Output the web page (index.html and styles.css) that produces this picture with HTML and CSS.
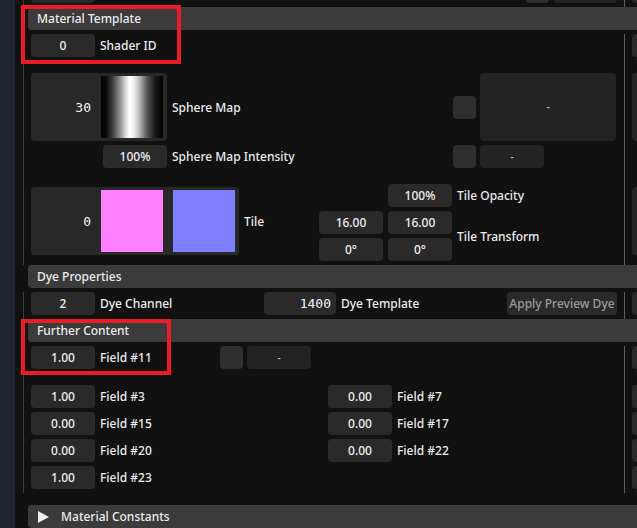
FILE: index.html
```html
<!DOCTYPE html>
<html lang="en">
<head>
<meta charset="utf-8">
<title>Material Template</title>
<link rel="stylesheet" href="styles.css">
</head>
<body>
<div class="app">
  <aside class="sidebar"></aside>
  <main class="main">
    <div class="tbl tbl-top">
      <div class="col-l">
        <div class="row">
          <span class="inp"></span>
          <span class="grp-r"><span class="sq"></span><span class="inp dk"></span></span>
        </div>
      </div>
      <div class="col-r"><span class="inp"></span></div>
    </div>

    <div class="hdr">Material Template</div>
    <div class="tbl">
      <div class="col-l">
        <div class="row"><span class="inp">0</span><span class="lbl">Shader ID</span></div>
        <div class="sphere">
          <div class="cell">
            <div class="bigbox sphere-box"><span class="num">30</span><span class="img grad"></span></div>
            <span class="lbl">Sphere Map</span>
          </div>
          <div class="cell">
            <span class="sq"></span><span class="bigbox dk dash-box"><span class="dash">-</span></span>
          </div>
          <div class="cell cell-intensity">
            <span class="inp">100%</span><span class="lbl">Sphere Map Intensity</span>
          </div>
          <div class="cell">
            <span class="sq"></span><span class="inp dk"><span class="dash">-</span></span>
          </div>
        </div>
        <div class="tile">
          <div class="cell tile-left">
            <div class="bigbox tile-box"><span class="num">0</span><span class="img pink"></span><span class="img blue"></span></div>
            <span class="lbl">Tile</span>
          </div>
          <div class="tile-grid">
            <span class="inp c2">100%</span><span class="lbl c3">Tile Opacity</span>
            <span class="inp">16.00</span><span class="inp">16.00</span><span class="lbl span2">Tile Transform</span>
            <span class="inp">0°</span><span class="inp">0°</span>
          </div>
        </div>
      </div>
      <div class="col-r">
        <span class="inp"></span>
        <span class="rbox r-sphere"></span>
        <span class="rbox r-tile"></span>
      </div>
    </div>

    <div class="hdr">Dye Properties</div>
    <div class="tbl">
      <div class="col-l">
        <div class="row">
          <span class="grp grp-dye"><span class="inp">2</span><span class="lbl">Dye Channel</span></span>
          <span class="grp"><span class="inp wide mono">1400</span><span class="lbl">Dye Template</span></span>
          <span class="btn">Apply Preview Dye</span>
        </div>
      </div>
      <div class="col-r"><span class="inp"></span></div>
    </div>

    <div class="hdr">Further Content</div>
    <div class="tbl tbl-last">
      <div class="col-l">
        <div class="row">
          <span class="grp grp-f11"><span class="inp">1.00</span><span class="lbl">Field #11</span></span>
          <span class="grp grp-sq"><span class="sq"></span><span class="inp dk"><span class="dash">-</span></span></span>
        </div>
        <div class="fields">
          <div class="row"><span class="inp">1.00</span><span class="lbl">Field #3</span></div>
          <div class="row"><span class="inp">0.00</span><span class="lbl">Field #7</span></div>
          <div class="row"><span class="inp">0.00</span><span class="lbl">Field #15</span></div>
          <div class="row"><span class="inp">0.00</span><span class="lbl">Field #17</span></div>
          <div class="row"><span class="inp">0.00</span><span class="lbl">Field #20</span></div>
          <div class="row"><span class="inp">0.00</span><span class="lbl">Field #22</span></div>
          <div class="row"><span class="inp">1.00</span><span class="lbl">Field #23</span></div>
        </div>
      </div>
      <div class="col-r">
        <span class="inp"></span>
        <span class="inp r-gap"></span>
        <span class="inp"></span>
        <span class="inp"></span>
        <span class="inp"></span>
      </div>
    </div>

    <div class="hdr hdr-tree"><svg class="tri" width="12" height="12" viewBox="0 0 12 12"><polygon points="0,0 11,6 0,12" fill="#f0f0f0"/></svg>Material Constants</div>
  </main>
  <div class="anno anno-1"></div>
  <div class="anno anno-2"></div>
</div>
</body>
</html>
```

FILE: styles.css
```css
* { box-sizing: border-box; }
html, body {
  margin: 0;
  padding: 0;
  background: #111111;
  width: 637px;
  height: 528px;
  overflow: hidden;
}
body {
  font-family: "Noto Sans", "DejaVu Sans", sans-serif;
  font-size: 12px;
  font-weight: 500;
  color: #ececec;
}
.app {
  position: relative;
  display: flex;
  width: 637px;
  height: 528px;
  overflow: hidden;
}
.sidebar {
  flex: 0 0 15px;
  background: #21272e;
}
.main {
  flex: 1 1 auto;
  min-width: 0;
  display: flex;
  flex-direction: column;
}
.hdr {
  flex: 0 0 23px;
  height: 23px;
  margin-left: 13px;
  margin-right: -10px;
  padding-left: 9px;
  background: #3b3b3b;
  border-radius: 4px;
  line-height: 23px;
  white-space: nowrap;
  display: flex;
  align-items: center;
}
.hdr-tree { margin-top: 12px; padding-left: 10px; }
.tri { margin-right: 11px; }

.tbl {
  display: grid;
  grid-template-columns: 602px 40px;
  margin-left: 8px;
  margin-top: 4px;
}
.tbl-top { margin-top: -20px; }
.col-l {
  border-left: 1px solid #3c3c40;
  border-right: 1px solid #5c5c64;
  padding: 0 7px 4px 7px;
  display: flex;
  flex-direction: column;
}
.col-r {
  padding: 0 0 0 7px;
  display: flex;
  flex-direction: column;
  gap: 4px;
}
.row {
  display: flex;
  align-items: center;
  height: 23px;
}
.lbl { margin-left: 5px; white-space: nowrap; }

.inp {
  flex: 0 0 auto;
  width: 64px;
  height: 23px;
  background: #2a2a2a;
  border-radius: 4px;
  text-align: center;
  line-height: 23px;
  color: #f0f0f0;
  display: inline-block;
  white-space: nowrap;
}
.inp.dk { background: #232323; }
.inp.wide { width: 72px; }
.mono {
  font-family: "DejaVu Sans Mono", monospace;
  font-size: 13px;
  font-weight: 400;
  text-align: right;
  padding-right: 5px;
  color: #f4f4f4;
}
.sq {
  flex: 0 0 auto;
  width: 23px;
  height: 23px;
  background: #2f2f2f;
  border-radius: 4px;
  display: inline-block;
}
.dash {
  font-size: 10px;
  color: #c8c8c8;
}
.grp-r {
  margin-left: auto;
  display: flex;
  gap: 4px;
}
.grp { display: flex; align-items: center; }
.grp-dye { width: 233px; }
.grp-f11 { width: 189px; }
.grp-sq { gap: 4px; }
.btn {
  margin-left: auto;
  width: 110px;
  height: 23px;
  line-height: 23px;
  background: #2a2a2a;
  border-radius: 4px;
  text-align: center;
  color: #9c9c9c;
  white-space: nowrap;
}

/* sphere section */
.sphere {
  margin-top: 16px;
  display: grid;
  grid-template-columns: 422px 163px;
  grid-template-rows: 68px 23px;
  row-gap: 4px;
}
.cell { display: flex; align-items: center; }
.cell-intensity { padding-left: 72px; }
.sphere .cell .sq + .bigbox,
.sphere .cell .sq + .inp { margin-left: 4px; }
.bigbox {
  display: flex;
  align-items: center;
  height: 68px;
  background: #282828;
  border-radius: 4px;
  padding: 3px 4px 3px 0;
}
.bigbox.dk { background: #232323; }
.sphere-box { width: 136px; }
.dash-box { width: 136px; justify-content: center; padding: 0; }
.num {
  width: 60px;
  text-align: right;
  font-family: "DejaVu Sans Mono", monospace;
  font-size: 13px;
  font-weight: 400;
  color: #f4f4f4;
}
.img {
  width: 62px;
  height: 62px;
  margin-left: 10px;
  flex: 0 0 62px;
}
.grad {
  background: linear-gradient(to right,
    #000 0%, #0a0a0a 8%, #3a3a3a 18%, #8a8a8a 30%, #dcdcdc 40%, #ffffff 46%,
    #f4f4f4 52%, #b8b8b8 62%, #5a5a5a 74%, #1c1c1c 86%, #000 100%);
}
.pink { background: #ff80ff; }
.blue { background: #8080ff; }

/* tile section */
.tile {
  margin-top: 16px;
  display: grid;
  grid-template-columns: 288px auto;
}
.tile-left { align-items: center; align-self: start; margin-top: 3px; }
.tile-box { width: 208px; }
.tile-grid {
  display: grid;
  grid-template-columns: 64px 64px auto;
  grid-template-rows: 23px 23px 23px;
  column-gap: 5px;
  row-gap: 4px;
  align-items: center;
}
.tile-grid .lbl { margin-left: 0; }
.tile-grid .c2 { grid-column: 2; }
.tile-grid .c3 { grid-column: 3; }
.tile-grid .span2 { grid-column: 3; grid-row: 2 / span 2; }

/* right clipped column */
.rbox {
  display: block;
  width: 64px;
  height: 68px;
  background: #262626;
  border-radius: 4px;
}
.r-sphere { margin-top: 12px; }
.r-tile { margin-top: 42px; }
.r-gap { margin-top: 12px; }
.col-r .inp { display: block; }

/* further content */
.fields {
  margin-top: 16px;
  display: grid;
  grid-template-columns: 297px auto;
  row-gap: 4px;
}

/* annotation boxes */
.anno {
  position: absolute;
  border: 4px solid #ea1c24;
  pointer-events: none;
}
.anno-1 { left: 21px; top: 5px; width: 160px; height: 59px; }
.anno-2 { left: 21px; top: 319px; width: 150px; height: 56px; }
```
